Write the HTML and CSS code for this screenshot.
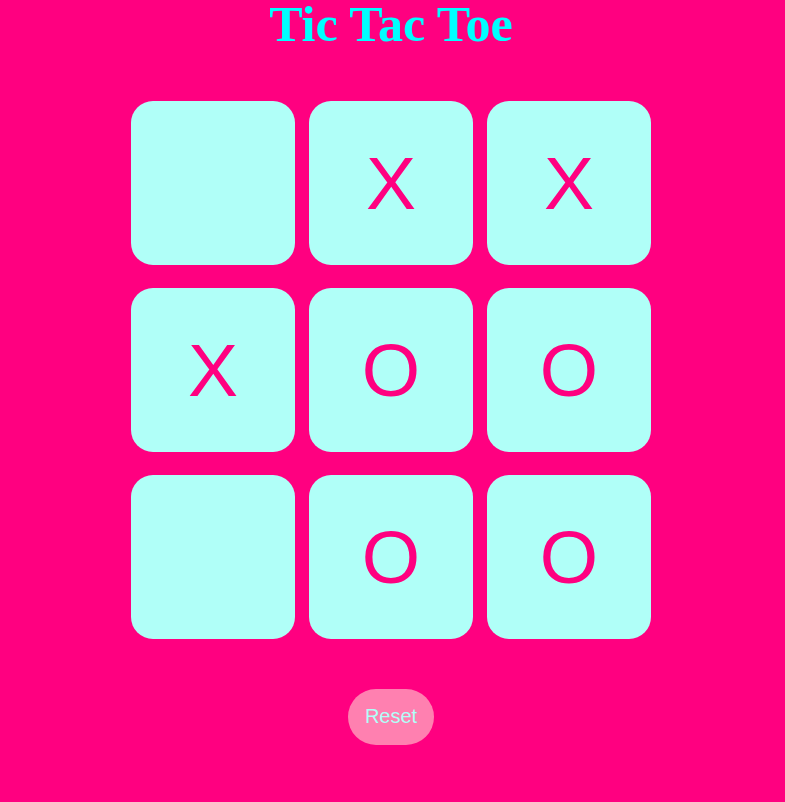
FILE: index.html
```html
<!DOCTYPE html>
<html>
<head>
<meta charset="utf-8">
<title>Tic Tac Toe</title>
<link rel="stylesheet" href="styles.css">
</head>
<body>
<div class="app">
  <h1 class="title">Tic Tac Toe</h1>
  <div class="board">
    <button class="cell"></button>
    <button class="cell">X</button>
    <button class="cell">X</button>
    <button class="cell">X</button>
    <button class="cell">O</button>
    <button class="cell">O</button>
    <button class="cell"></button>
    <button class="cell">O</button>
    <button class="cell">O</button>
  </div>
  <button class="reset">Reset</button>
</div>
</body>
</html>
```
FILE: styles.css
```css
html, body {
  margin: 0;
  padding: 0;
  background: #ff0080;
}
.app {
  display: flex;
  flex-direction: column;
  align-items: center;
  padding-right: 3px;
}
.title {
  margin: 0;
  font-family: "Liberation Serif", "Times New Roman", serif;
  font-weight: bold;
  font-size: 50px;
  line-height: 48px;
  color: #00ffff;
}
.board {
  margin-top: 53px;
  display: grid;
  grid-template-columns: repeat(3, 164px);
  grid-auto-rows: 164px;
  column-gap: 14px;
  row-gap: 23px;
}
.cell {
  border: none;
  margin: 0;
  padding: 0;
  border-radius: 22px;
  background: #b0fff8;
  color: #ff0080;
  font-family: "Liberation Sans", Arial, sans-serif;
  font-size: 75px;
  display: flex;
  align-items: center;
  justify-content: center;
}
.reset {
  margin-top: 50px;
  width: 86px;
  height: 56px;
  border: none;
  border-radius: 28px;
  background: #ff80b0;
  color: #b0fff8;
  font-family: "Liberation Sans", Arial, sans-serif;
  font-size: 20px;
  padding: 0 0 2px 0;
}
```
